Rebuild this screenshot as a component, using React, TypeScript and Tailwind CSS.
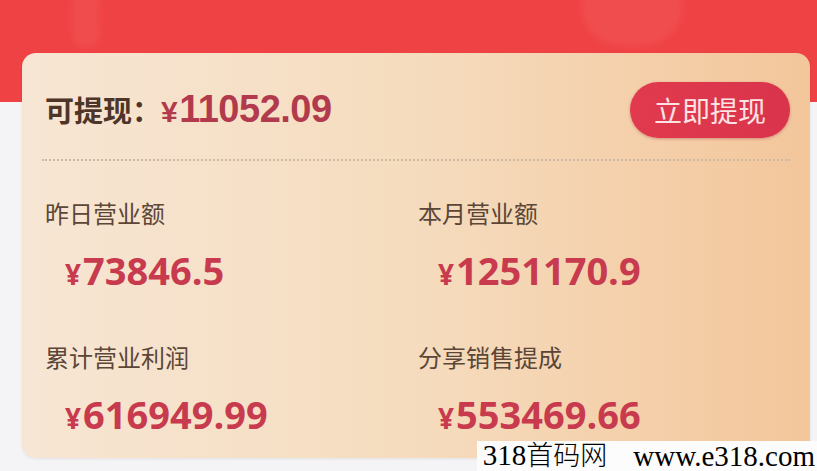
const stats = [
  { label: "昨日营业额", value: "73846.5" },
  { label: "本月营业额", value: "1251170.9" },
  { label: "累计营业利润", value: "616949.99" },
  { label: "分享销售提成", value: "553469.66" },
];

const App = () => (
  <div
    className="relative w-[817px] h-[471px] overflow-hidden bg-[#f4f4f6]"
    style={{ fontFamily: '"Noto Sans CJK SC", "Liberation Sans", sans-serif' }}
  >
    {/* red header */}
    <div className="relative h-[102px] bg-[#ef4245] overflow-hidden">
      <div className="absolute -top-[32px] left-[582px] w-[100px] h-[78px] rounded-full bg-[#f25858] opacity-50 blur-[3px]" />
      <div className="absolute -top-[10px] left-[72px] w-[28px] h-[58px] rounded-full bg-[#f15656] opacity-50 blur-[3px]" />
    </div>

    {/* card */}
    <div className="relative -mt-[49px] ml-[22px] w-[788px] h-[405px] rounded-[14px] bg-gradient-to-r from-[#f7e6d4] via-[#f5dcbe] to-[#f3c69b] shadow-[0_1px_3px_rgba(0,0,0,0.08)] px-[20px] pt-[29px]">
      <div className="flex items-center justify-between">
        <div className="flex items-baseline pl-[3px]">
          <span className="text-[29px] font-bold text-[#4d3527]">可提现：</span>
          <span
            className="text-[38px] font-bold text-[#b23a4d] tracking-[-0.5px] leading-none"
            style={{ fontFamily: '"Liberation Sans", sans-serif' }}
          >
            <span className="text-[30px] mr-[2px]">¥</span>11052.09
          </span>
        </div>
        <button className="w-[160px] h-[56px] rounded-full bg-gradient-to-r from-[#e13a4e] to-[#d9344c] text-[28px] text-[#fde3e3] shadow-[0_1px_3px_rgba(150,30,40,0.35)] leading-none">
          立即提现
        </button>
      </div>

      <div className="mt-[21px] border-t-2 border-dotted border-[#cdb9a3]" />

      <div className="grid grid-cols-[373px_1fr] gap-y-[44px] pl-[3px] pt-[36px]">
        {stats.map((s) => (
          <div key={s.label} className="flex flex-col">
            <span className="text-[24px] leading-[32px] text-[#5b4637]">{s.label}</span>
            <span
              className="mt-[18px] pl-[20px] text-[38px] font-bold leading-[46px] text-[#c83a4d]"
              style={{ fontFamily: '"Open Sans", "Liberation Sans", sans-serif' }}
            >
              <span className="text-[28px] mr-[2px]">¥</span>
              {s.value}
            </span>
          </div>
        ))}
      </div>
    </div>

    {/* watermark */}
    <div
      className="absolute right-0 bottom-0 h-[30px] flex items-end gap-[26px] bg-[#fcfcfc] pl-[6px] pr-[2px] text-[29px] leading-[30px] text-black"
      style={{ fontFamily: '"Liberation Serif", "Noto Sans CJK SC", serif' }}
    >
      <span>
        318<span className="font-light text-[27px]">首码网</span>
      </span>
      <span>www.e318.com</span>
    </div>
  </div>
);

export default App;
